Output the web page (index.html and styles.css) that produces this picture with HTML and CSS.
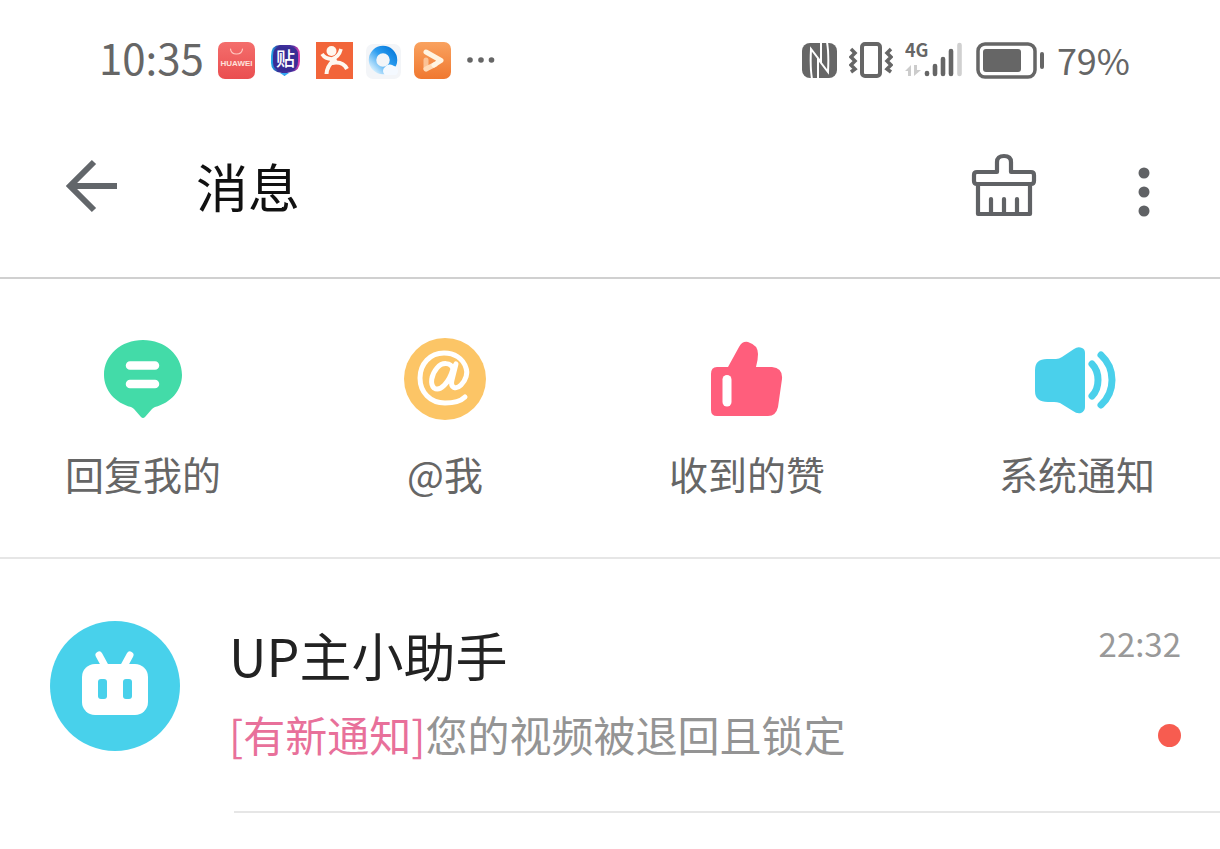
FILE: index.html
```
<!DOCTYPE html>
<html lang="zh-CN">
<head>
<meta charset="utf-8">
<meta name="viewport" content="width=device-width, initial-scale=1">
<title>消息</title>
<link rel="stylesheet" href="styles.css">
</head>
<body>
<div class="status">
  <div class="status-left">
    <span class="clock">10:35</span>
    <svg class="app" viewBox="0 0 37 37" width="37" height="37">
      <defs><linearGradient id="hw" x1="0" y1="0" x2="0" y2="1"><stop offset="0" stop-color="#f46e6c"/><stop offset="1" stop-color="#ea4e50"/></linearGradient></defs>
      <rect width="37" height="37" rx="7" fill="url(#hw)"/>
      <path d="M12.500 7Q13 12 18.500 12T24.500 7" fill="none" stroke="#ffc9c2" stroke-width="1.200" stroke-linecap="round"/>
      <text x="18.500" y="24" text-anchor="middle" class="hw-text">HUAWEI</text>
    </svg>
    <svg class="app" viewBox="0 0 37 37" width="37" height="37">
      <defs><linearGradient id="tb" x1="0" y1="0" x2="1" y2="0"><stop offset="0" stop-color="#21b5ee"/><stop offset=".25" stop-color="#352f98"/><stop offset=".75" stop-color="#4a2fa0"/><stop offset="1" stop-color="#ee45ae"/></linearGradient></defs>
      <path d="M13 3H23Q33 3 33 13V19Q33 29 24 30L20 31L17.500 34L15 31Q4 30 4 21V14Q4 3 13 3Z" fill="url(#tb)"/>
      <path d="M13 31L17.500 34L22 31Z" fill="#36a9f3"/>
      <path d="M13 5H23Q31 5 31 13V19Q31 28 23 29H14Q6 28 6 20V14Q6 5 13 5Z" fill="#382d95"/>
      <text x="18.500" y="24" text-anchor="middle" class="tb-text">贴</text>
    </svg>
    <svg class="app" viewBox="0 0 37 37" width="37" height="37">
      <rect width="37" height="37" fill="#f2653a"/>
      <circle cx="15.500" cy="9" r="5" fill="#fff8ef"/>
      <path d="M6 12Q9 17 16 17Q23 15 25 7" fill="none" stroke="#fff8ef" stroke-width="3.600"/>
      <path d="M10.500 32Q11 24 18 18M16 21Q27 19 31 27" fill="none" stroke="#fff8ef" stroke-width="4"/>
      <path d="M13 16H20L22 21L15 23Z" fill="#fff8ef"/>
    </svg>
    <svg class="app" viewBox="0 0 37 37" width="37" height="37">
      <defs><linearGradient id="qb" x1="1" y1="0" x2="0" y2="1"><stop offset="0" stop-color="#087bdc"/><stop offset=".45" stop-color="#2d9ef0"/><stop offset="1" stop-color="#d8f1ff"/></linearGradient></defs>
      <rect x="1" y="2" width="35" height="35" rx="7" fill="#f3f5f8"/>
      <circle cx="18" cy="18" r="10.500" fill="none" stroke="url(#qb)" stroke-width="7.500"/>
      <path d="M20 33A5 5 0 0 1 20 25A6 6 0 0 1 29 24A5 5 0 0 1 31 33Z" fill="#f4f9ff"/>
    </svg>
    <svg class="app" viewBox="0 0 37 37" width="37" height="37">
      <defs><linearGradient id="vd" x1="0" y1="0" x2="0" y2="1"><stop offset="0" stop-color="#f9a25f"/><stop offset="1" stop-color="#f07830"/></linearGradient></defs>
      <rect width="37" height="37" rx="7" fill="url(#vd)"/>
      <path d="M12 18V27" stroke="#fbc295" stroke-width="5" stroke-linecap="round"/>
      <path d="M12 27L21 22.500" stroke="#ffdbb8" stroke-width="5" stroke-linecap="round"/>
      <path d="M12 10L27 18.500L20 23" fill="none" stroke="#fff4e2" stroke-width="5" stroke-linecap="round" stroke-linejoin="round"/>
    </svg>
    <svg class="more-apps" viewBox="0 0 28 8" width="28" height="8" fill="#666"><circle cx="3" cy="4" r="2.800"/><circle cx="14" cy="4" r="2.800"/><circle cx="24.500" cy="4" r="2.800"/></svg>
  </div>
  <div class="status-right">
    <svg viewBox="0 0 35 35" width="35" height="35">
      <rect width="35" height="35" rx="8" fill="#666"/>
      <path d="M16 36V16L26 29Q27 10 25 -1M19 -1V19L9 6Q8 25 10 36" fill="none" stroke="#fff" stroke-width="2"/>
    </svg>
    <svg class="vibrate" viewBox="0 0 44 36" width="44" height="36" fill="none" stroke="#666">
      <rect x="13" y="2" width="18" height="32" rx="3" stroke-width="4"/>
      <path d="M2 7L6 11L2 15L6 19L2 23L6 27L2 30M42 7L38 11L42 15L38 19L42 23L38 27L42 30" stroke-width="3.500"/>
    </svg>
    <svg class="signal" viewBox="0 -8 58 56" width="58" height="56">
      <text x="0" y="17" class="net-text">4G</text>
      <path d="M0 31L6 25V36H3V31ZM9 25H12V30H16L9 36Z" fill="#ccc"/>
      <g stroke="#666" stroke-width="4.600" stroke-linecap="round"><path d="M22 33V34M30 26V34M38 19V34M46 11V34"/><path d="M54.500 5V34" stroke="#d0d0d0"/></g>
    </svg>
    <svg class="battery" viewBox="0 0 69 37" width="69" height="37">
      <rect x="2" y="2" width="57" height="33" rx="7" fill="none" stroke="#666" stroke-width="3.500"/>
      <rect x="7" y="7" width="38" height="23" rx="3" fill="#666"/>
      <path d="M66 12V25" stroke="#666" stroke-width="4" stroke-linecap="round"/>
    </svg>
    <span class="percent">79%</span>
  </div>
</div>

<header class="bar">
  <button class="icon-btn" aria-label="返回">
    <svg viewBox="0 0 54 54" width="54" height="54" fill="none" stroke="#62666a" stroke-width="6"><path d="M30 3L6 27L30 51M6 27H53"/></svg>
  </button>
  <h1 class="title">消息</h1>
  <button class="icon-btn" aria-label="清除未读">
    <svg viewBox="0 0 66 66" width="66" height="66" fill="none" stroke="#606265" stroke-width="4.200" stroke-linejoin="round" stroke-linecap="round">
      <path d="M26 19V9Q26 3 33 3T40 9V19H60Q63 19 63 22V28Q63 31 60 31H6Q3 31 3 28V22Q3 19 6 19Z"/>
      <path d="M7 31V61H59V31M20 46V60M33 46V60M46 46V60"/>
    </svg>
  </button>
  <button class="icon-btn menu" aria-label="更多">
    <svg viewBox="0 0 12 50" width="12" height="50" fill="#606265"><circle cx="6" cy="6" r="5.500"/><circle cx="6" cy="25" r="5.500"/><circle cx="6" cy="44" r="5.500"/></svg>
  </button>
</header>

<nav class="tabs">
  <a class="tab" href="#reply">
    <svg viewBox="0 0 84 84" width="84" height="84">
      <path d="M42 3C64 3 81 18 81 38C81 53 70 66 54 70Q52 71 51 72L44 80Q42 82 40 80L33 72Q32 71 30 70C14 66 3 53 3 38C3 18 20 3 42 3Z" fill="#43dba8"/>
      <path d="M29 28.500H54M29 47H54" stroke="#fff" stroke-width="8.500" stroke-linecap="round"/>
    </svg>
    <span>回复我的</span>
  </a>
  <a class="tab" href="#at">
    <svg viewBox="0 0 84 84" width="84" height="84" fill="none" stroke="#fff" stroke-width="5" stroke-linecap="round" stroke-linejoin="round">
      <circle cx="42" cy="42" r="41" fill="#fcc566" stroke="none"/>
      <path d="M50 32C48 25 39 25 34 31C28 38 27 47 31 51C37 55 46 46 50 32L53 27L49 43C47 51 53 53 58 48C63 43 65 36 63 31C60 21 51 16 41 16C27 16 17 27 17 41C17 55 27 66 42 66C51 66 58 64 62 60"/>
    </svg>
    <span>@我</span>
  </a>
  <a class="tab" href="#likes">
    <svg viewBox="0 0 84 84" width="84" height="84">
      <path d="M12 30H23L34 10Q37 4 43 5Q53 8 53 17Q53 23 51 30H67Q78 31 77 42L73 70Q71 79 63 79H12Q6 79 6 73V37Q6 30 12 30Z" fill="#ff5e7c"/>
      <path d="M22 42.500V65" stroke="#fff" stroke-width="9" stroke-linecap="round"/>
    </svg>
    <span>收到的赞</span>
  </a>
  <a class="tab last" href="#system">
    <svg viewBox="0 0 84 84" width="84" height="84">
      <path d="M12 22H21Q24 22 27 20L39 12Q43 9 47 11Q50 12 50 16V70Q50 74 46 76Q42 77 38 74L25 66Q22 65 19 65H13Q0 65 0 54V33Q0 22 12 22Z" fill="#4ad0eb"/>
      <path d="M57 27Q63 33 63 43T57 59M66 18Q77 28 77 43T66 68" fill="none" stroke="#4ad0eb" stroke-width="7" stroke-linecap="round"/>
    </svg>
    <span>系统通知</span>
  </a>
</nav>

<main class="list">
  <a class="chat" href="#assistant">
    <svg class="avatar" viewBox="0 0 130 130" width="130" height="130">
      <circle cx="65" cy="65" r="65" fill="#48d1eb"/>
      <path d="M49 34L55 45M80 34L74 45" stroke="#fff" stroke-width="7" stroke-linecap="round"/>
      <rect x="32" y="43" width="66" height="51" rx="13" fill="#fff"/>
      <rect x="48" y="58" width="9" height="20" rx="3" fill="#48d1eb"/><rect x="73" y="58" width="9" height="20" rx="3" fill="#48d1eb"/>
    </svg>
    <div class="body">
      <div class="row"><span class="name">UP主小助手</span><time class="time">22:32</time></div>
      <div class="row"><p class="preview"><span class="flag">[有新通知]</span>您的视频被退回且锁定</p><span class="unread"></span></div>
    </div>
  </a>
  <hr class="divider">
</main>
</body>
</html>
```
FILE: styles.css
```
* {
  box-sizing: border-box;
}

body {
  margin: 0;
  background: #fff;
  color: #222;
  font-family: "Noto Sans CJK SC", sans-serif;
}

svg {
  display: block;
  flex: none;
}

a {
  color: inherit;
  text-decoration: none;
}

.status {
  display: flex;
  justify-content: space-between;
  height: 120px;
  padding: 0 90px 0 99px;
  color: #666;
}

.status-left,
.status-right {
  display: flex;
  align-items: center;
  height: 120px;
}

.clock {
  margin-right: 14px;
  padding-bottom: 6px;
  font-size: 42px;
  line-height: 60px;
}

.app {
  margin-right: 12px;
}

.more-apps {
  margin-left: 4px;
}

.hw-text {
  fill: #ffe1dc;
  font: 700 8px "Liberation Sans", sans-serif;
}

.tb-text {
  fill: #fff;
  font: 500 19px "Noto Sans CJK SC", sans-serif;
}

.net-text {
  fill: #666;
  font: 700 18px "Noto Sans CJK SC", sans-serif;
}

.vibrate {
  margin-left: 12px;
}

.signal {
  margin-left: 12px;
}

.battery {
  margin: 0 12px 0 13px;
}

.percent {
  padding-bottom: 2px;
  font-size: 36px;
  line-height: 60px;
}

.bar {
  display: flex;
  align-items: center;
  height: 159px;
  padding: 0 70px 26px 64px;
  border-bottom: 2px solid #d0d0d0;
}

.title {
  flex: 1;
  margin: 0 0 0 78px;
  font-size: 52px;
  font-weight: 400;
  line-height: 72px;
  color: #111;
}

.icon-btn {
  padding: 0;
  border: 0;
  background: none;
}

.menu {
  margin: 12px 0 0 101px;
}

.tabs {
  display: grid;
  grid-template-columns: auto 451fr auto 175fr auto;
  padding: 58px 65px 56px;
  border-bottom: 2px solid #e6e6e6;
}

.tab {
  display: flex;
  flex-direction: column;
  align-items: center;
  gap: 24px;
  color: #666;
  font-size: 39px;
  line-height: 56px;
}

.last {
  grid-column: 5;
}

.chat {
  display: flex;
  gap: 49px;
  padding: 62px 0 0 50px;
}

.body {
  display: flex;
  flex: 1;
  flex-direction: column;
  gap: 6px;
  padding-bottom: 36px;
}

.row {
  display: flex;
  align-items: center;
  justify-content: space-between;
  padding-right: 39px;
}

.name {
  font-size: 52px;
  line-height: 68px;
}

.time {
  padding-bottom: 24px;
  font-size: 33px;
  line-height: 44px;
  color: #999;
}

.preview {
  margin: 0;
  padding: 12px 0 14px;
  font-size: 42px;
  line-height: 54px;
  color: #949494;
}

.flag {
  color: #e8709a;
}

.unread {
  width: 23px;
  height: 23px;
  border-radius: 50%;
  background: #f75c50;
}

.divider {
  height: 2px;
  margin: 0 0 0 234px;
  border: 0;
  background: #e6e6e6;
}
```
